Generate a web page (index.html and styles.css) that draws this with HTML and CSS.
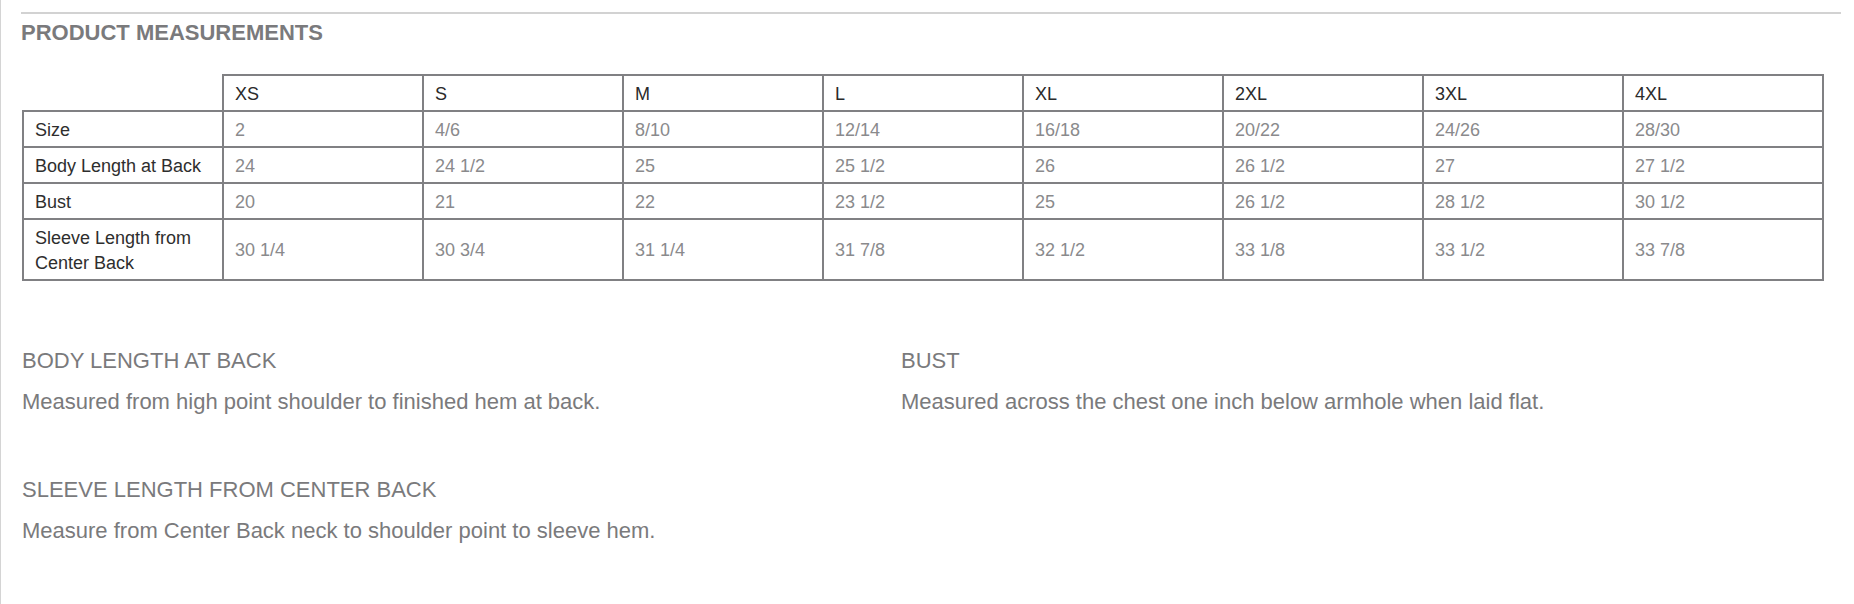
FILE: index.html
```html
<!DOCTYPE html>
<html lang="en">
<head>
<meta charset="utf-8">
<title>Product Measurements</title>
<link rel="stylesheet" href="styles.css">
</head>
<body>
<div class="page">
  <section class="measurements">
    <h2 class="title">PRODUCT MEASUREMENTS</h2>
    <table class="size-table">
      <thead>
        <tr>
          <th class="corner"></th>
          <th>XS</th><th>S</th><th>M</th><th>L</th><th>XL</th><th>2XL</th><th>3XL</th><th>4XL</th>
        </tr>
      </thead>
      <tbody>
        <tr>
          <th class="label">Size</th>
          <td>2</td><td>4/6</td><td>8/10</td><td>12/14</td><td>16/18</td><td>20/22</td><td>24/26</td><td>28/30</td>
        </tr>
        <tr>
          <th class="label">Body Length at Back</th>
          <td>24</td><td>24 1/2</td><td>25</td><td>25 1/2</td><td>26</td><td>26 1/2</td><td>27</td><td>27 1/2</td>
        </tr>
        <tr>
          <th class="label">Bust</th>
          <td>20</td><td>21</td><td>22</td><td>23 1/2</td><td>25</td><td>26 1/2</td><td>28 1/2</td><td>30 1/2</td>
        </tr>
        <tr>
          <th class="label">Sleeve Length from Center Back</th>
          <td>30 1/4</td><td>30 3/4</td><td>31 1/4</td><td>31 7/8</td><td>32 1/2</td><td>33 1/8</td><td>33 1/2</td><td>33 7/8</td>
        </tr>
      </tbody>
    </table>
    <div class="definitions">
      <div class="definition">
        <h3 class="def-title">BODY LENGTH AT BACK</h3>
        <p class="def-text">Measured from high point shoulder to finished hem at back.</p>
      </div>
      <div class="definition">
        <h3 class="def-title">BUST</h3>
        <p class="def-text">Measured across the chest one inch below armhole when laid flat.</p>
      </div>
      <div class="definition">
        <h3 class="def-title">SLEEVE LENGTH FROM CENTER BACK</h3>
        <p class="def-text">Measure from Center Back neck to shoulder point to sleeve hem.</p>
      </div>
    </div>
  </section>
</div>
</body>
</html>
```
FILE: styles.css
```css
html, body {
  margin: 0;
  padding: 0;
  background: #ffffff;
}

body {
  font-family: "Liberation Sans", Arial, Helvetica, sans-serif;
  color: #777777;
}

.page {
  min-height: 604px;
  box-sizing: border-box;
  border-left: 1px solid #d4d4d4;
  padding: 12px 13px 0 20px;
}

.measurements {
  border-top: 2px solid #d2d2d2;
  padding-top: 6px;
}

.title {
  margin: 0 0 28px 0;
  font-size: 22px;
  line-height: 26px;
  font-weight: bold;
  color: #7a7a7c;
}

.size-table {
  border-collapse: collapse;
  table-layout: fixed;
  width: 1802px;
  margin-left: 1px;
  font-size: 18px;
  line-height: 25px;
}

.size-table th,
.size-table td {
  border: 2px solid #808083;
  padding: 5.5px 10px 3.5px 11px;
  text-align: left;
  vertical-align: middle;
  font-weight: normal;
}

.size-table thead th {
  color: #2a2a2a;
}

.size-table th.corner {
  border-top: none;
  border-left: none;
}

.size-table th.label {
  color: #2e2e2e;
}

.size-table td {
  color: #8a8a8c;
}

.definitions {
  display: grid;
  grid-template-columns: 879px 1fr;
  row-gap: 62px;
  margin-top: 67px;
  margin-left: 1px;
}

.def-title {
  margin: 0;
  font-size: 22px;
  line-height: 26px;
  font-weight: normal;
  color: #7a7a7c;
}

.def-text {
  margin: 15px 0 0 0;
  font-size: 22px;
  line-height: 26px;
  color: #7a7a7c;
}
```
